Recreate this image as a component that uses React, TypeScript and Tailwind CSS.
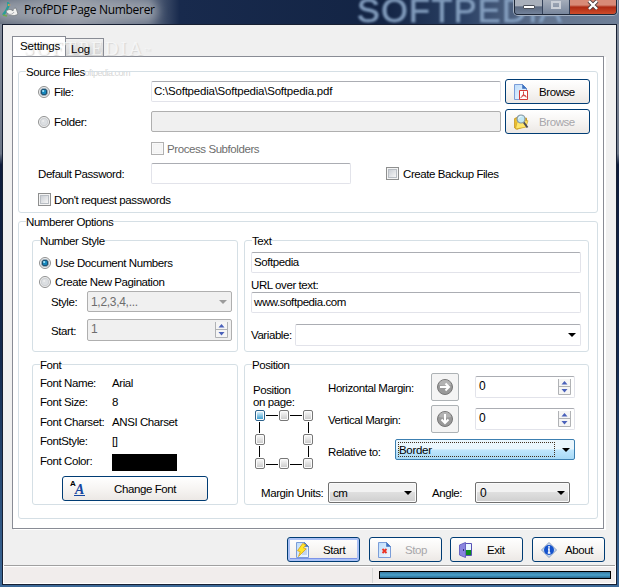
import type { ReactNode } from 'react'
import clsx from 'clsx'

type BoxProps = { className?: string; children?: ReactNode }

function Label({ className, children }: BoxProps) {
  return <span className={clsx('block shrink-0 whitespace-nowrap', className)}>{children}</span>
}

function Group({ title, className, children }: BoxProps & { title: string }) {
  return (
    <section className={clsx('relative shrink-0 rounded-[3px] border border-[#d5dfe5]', className)}>
      <h2 className="absolute -top-2 left-[7px] h-4 bg-white leading-[17px] whitespace-nowrap">{title}</h2>
      {children}
    </section>
  )
}

function Radio({ checked }: { checked?: boolean }) {
  return (
    <svg width="12" height="12" viewBox="0 0 12 12" className="shrink-0">
      <circle cx="6" cy="6" r="5.5" fill="#f4f4f4" stroke="#8e8f8f" />
      <circle cx="6" cy="6" r="3.8" fill={checked ? '#16415f' : '#dcdfe2'} stroke={checked ? '#b4c1cb' : '#c5c8cb'} strokeWidth=".8" />
      {checked && <circle cx="6" cy="6" r="2.4" fill="#1788bd" />}
      <circle cx="5.2" cy="5" r="1.1" fill={checked ? '#a9e5fa' : '#eeeeee'} />
    </svg>
  )
}

function CheckBox({ disabled }: { disabled?: boolean }) {
  return (
    <span
      className={clsx(
        'block size-[13px] shrink-0 border p-px',
        disabled ? 'border-[#b1b1b1] bg-[#f9f9f9]' : 'border-[#8e8f8f] bg-[#f4f4f4]',
      )}
    >
      <span
        className={clsx(
          'block size-full border',
          disabled ? 'border-[#f3f3f3] bg-[#f6f6f6]' : 'border-[#b9bec4] bg-gradient-to-br from-[#cbcfd5] to-[#f6f6f6]',
        )}
      />
    </span>
  )
}

function Field({ className, disabled, children }: BoxProps & { disabled?: boolean }) {
  return (
    <div
      className={clsx(
        'flex h-[21px] shrink-0 items-center rounded-[2px] border pb-px pl-[2px]',
        disabled ? 'border-[#afafaf] bg-[#f0f0f0]' : 'border-[#e2e3ea] border-t-[#abadb3] bg-white',
        className,
      )}
    >
      {children}
    </div>
  )
}

function Caret({ className }: { className: string }) {
  return (
    <svg width="8" height="4" viewBox="0 0 8 4" className={clsx('ml-auto shrink-0', className)}>
      <path d="M0 0h8L4 4z" fill="currentColor" />
    </svg>
  )
}

function Spinner({ value, className, disabled }: { value: string; className?: string; disabled?: boolean }) {
  return (
    <div
      className={clsx(
        'flex h-[22px] shrink-0 rounded-[2px] border pl-[3px]',
        disabled ? 'border-[#afafaf] bg-[#f0f0f0] text-[#6d6d6d]' : 'border-[#e2e3ea] border-t-[#abadb3] bg-white',
        className,
      )}
    >
      <span className="text-[12px] leading-[19px]">{value}</span>
      <svg width="13" height="16" viewBox="0 0 13 16" className="mt-[2px] mr-[3px] ml-auto shrink-0">
        <path d="M.5 0v15.5h12V0" fill="#f5f5f5" stroke="#b0b2b5" />
        <path d="M0 7.5h13" stroke="#b0b2b5" />
        <path d="M6.5 2 9.5 5.5h-6zM6.5 13.5l3-3.5h-6z" fill="#4a61ba" />
      </svg>
    </div>
  )
}

function Select({ className, children }: BoxProps) {
  return (
    <div
      className={clsx(
        'flex h-[21px] shrink-0 items-center rounded-[2px] border border-[#707070] bg-gradient-to-b from-[#f2f2f2] from-45% via-[#dfdfdf] via-50% to-[#cfcfcf] pl-[4px] shadow-[inset_0_0_0_1px_#fafafa]',
        className,
      )}
    >
      {children}
      <Caret className="mr-[4px] text-black" />
    </div>
  )
}

function Button({ icon, className, disabled, active, children }: BoxProps & { icon: ReactNode; disabled?: boolean; active?: boolean }) {
  return (
    <button
      className={clsx(
        'flex h-[25px] shrink-0 items-center rounded-[3px] border border-[#003c74] bg-gradient-to-b from-white via-[#f7f5f3] to-[#ece8e5] pl-[8px]',
        active && 'shadow-[inset_0_0_0_2px_#a9c0f5,inset_0_-3px_0_#7d93e8]',
        disabled && 'text-[#a7a6aa]',
        className,
      )}
    >
      {icon}
      {children}
    </button>
  )
}

function PageShape({ id }: { id: string }) {
  return (
    <>
      <defs>
        <linearGradient id={id} x1="0" x2="1" y1="0" y2="1">
          <stop stopColor="#bcdcfb" />
          <stop offset="1" stopColor="#f4f9ff" />
        </linearGradient>
      </defs>
      <path d="M.5.5h8l4 4v11H.5z" fill={`url(#${id})`} stroke="#7b9dd8" />
      <path d="M8.5.5v4h4z" fill="#3e72c0" stroke="#3e72c0" strokeWidth=".6" />
    </>
  )
}

function PdfIcon() {
  return (
    <svg width="15" height="16" viewBox="0 0 15 16" className="shrink-0">
      <PageShape id="pdf" />
      <path d="M5.5 6.5h8v9h-8z" fill="#fff" stroke="#d33b38" />
      <path d="M9.5 7.5v2.2c0 1.8-1.3 3.3-3 4M9.5 9.7c.3 1.8 1.5 3 3.2 3.3M7.5 12.2c1.3-.6 2.7-.7 4.5-.3" fill="none" stroke="#d33b38" />
    </svg>
  )
}

function FolderSearchIcon() {
  return (
    <svg width="15" height="16" viewBox="0 0 15 16" className="shrink-0">
      <path d="M.7 4.5 4 3.2l1 1.5 7.5-.5V12L3 15.2.7 14z" fill="#f2c832" stroke="#c8961c" />
      <path d="m3 8 3-1 8-.3-2.2 6.5L1.5 15z" fill="#ffe66b" stroke="#cda22a" strokeWidth=".7" />
      <path d="m9.5 8 4 5.5" stroke="#4d4d55" strokeWidth="2" />
      <circle cx="7" cy="5" r="4" fill="#c2e8f5" stroke="#8796a0" strokeWidth="1.2" />
      <path d="M4.5 4.5c.5-1.6 1.8-2 3-2" fill="none" stroke="#fff" />
    </svg>
  )
}

function LightningPageIcon() {
  return (
    <svg width="14" height="16" viewBox="0 0 14 16" className="shrink-0">
      <PageShape id="run" />
      <path d="M7 8h4M7 10h4M6 12h5" stroke="#93acd4" strokeWidth=".8" />
      <path d="M6.7 1.5 10 2.8 7.4 6l2.8.8-7.7 7.7 1.8-4.8-2.8-1z" fill="#ffe72b" stroke="#d8a01a" strokeWidth=".8" />
    </svg>
  )
}

function StopPageIcon() {
  return (
    <svg width="14" height="16" viewBox="0 0 14 16" className="shrink-0">
      <PageShape id="stop" />
      <path d="m4.5 7 4 4m0-4-4 4" stroke="#ec3323" strokeWidth="1.8" />
    </svg>
  )
}

function DoorIcon() {
  return (
    <svg width="14" height="16" viewBox="0 0 14 16" className="shrink-0">
      <path d="M4.5 1.5h8v12h-8z" fill="#e9f6ff" stroke="#5751b5" />
      <path d="M7 8h5v5H7z" fill="#0c8c1e" />
      <path d="m.5 3 6-2.5v15l-6-2.5z" fill="#8984df" stroke="#6964c3" />
      <path d="M4.5 7v2" stroke="#353276" />
    </svg>
  )
}

function InfoIcon() {
  return (
    <svg width="16" height="16" viewBox="0 0 16 16" className="shrink-0">
      <path d="m8 .5 7.5 7.5L8 15.5.5 8z" fill="#c4d6ef" stroke="#8b9fbe" strokeLinejoin="round" />
      <circle cx="8" cy="8" r="5" fill="#1552cc" />
      <path d="M8 4v1.7M7 7h1v4M6.8 11h2.6" fill="none" stroke="#fff" strokeWidth="1.5" />
    </svg>
  )
}

function FontIcon() {
  return (
    <span className="relative block h-4 w-4 shrink-0 text-left font-['Liberation_Serif',serif] font-bold tracking-normal">
      <span className="absolute -top-px -left-px font-['Liberation_Sans',sans-serif] text-[8px] leading-[8px]">A</span>
      <span className="absolute top-[3px] left-[3px] border-b border-[#1546a0] px-px text-[14px] leading-[11px] text-[#1546a0] italic">A</span>
    </span>
  )
}

function ArrowButton({ down }: { down?: boolean }) {
  return (
    <button className="flex size-7 shrink-0 items-center justify-center rounded-[2px] border border-[#adb2b5] bg-[#f4f4f4]">
      <svg width="16" height="16" viewBox="0 0 16 16">
        <circle cx="8" cy="8" r="7.5" fill="#999" stroke="#777" />
        <path d="M2 6a6 5 0 0 1 12 0c-4 1-8 1-12 0z" fill="#b3b3b3" />
        <path d="M3 8h9M8.5 4.5 12 8l-3.5 3.5" fill="none" stroke="#fff" strokeWidth="2" transform={down ? 'rotate(90 8 8)' : undefined} />
      </svg>
    </button>
  )
}

const anchors = [
  [0, 0], [24, 0], [48, 0],
  [0, 24], [48, 24],
  [0, 48], [24, 48], [48, 48],
]

function AnchorPicker() {
  return (
    <svg width="58" height="59" viewBox="0 0 58 59" className="shrink-0">
      <defs>
        <linearGradient id="anchor" x1="0" x2="0" y1="0" y2="1">
          <stop stopColor="#f5f5f5" />
          <stop offset="1" stopColor="#cdcdcd" />
        </linearGradient>
        <linearGradient id="anchorOn" x1="0" x2="0" y1="0" y2="1">
          <stop stopColor="#d8f0fb" />
          <stop offset="1" stopColor="#3f9fd0" />
        </linearGradient>
      </defs>
      <path d="M11 5.5h12M35 5.5h12M11 54.5h12M35 54.5h12M4.5 12v11M4.5 36v11M53.5 12v11M53.5 36v11" stroke="#000" />
      {anchors.map(([x, y], i) => (
        <g key={i} transform={`translate(${x} ${y})`}>
          <rect x=".5" y=".5" width="9" height="10" rx="1.5" fill="#fbfbfb" stroke={i === 0 ? '#2c628b' : '#777'} />
          <rect x="2" y="2" width="6" height="7" fill={i === 0 ? 'url(#anchorOn)' : 'url(#anchor)'} />
        </g>
      ))}
    </svg>
  )
}

function TitleBar() {
  return (
    <header className="relative flex h-6 shrink-0 overflow-hidden bg-[linear-gradient(90deg,#5a6678_0,#8c93a0_12%,#636f84_24%,#182a4d_29%,#132444_62%,#2c4266_75%,#62748f_88%,#6f7f97_100%)]">
      <div className="absolute top-0 -left-2 h-[22px] w-[166px] rounded-full bg-[#a8adb5]/70 blur-[5px]" />
      <div className="absolute -top-[9px] left-[357px] text-[34px] leading-[38px] tracking-[1.5px] text-[#8ea9c8]/90 blur-[1px] font-['Liberation_Sans',sans-serif] [-webkit-text-stroke:1px_#7893b5]">
        SOFTPEDIA
      </div>
      <svg width="17" height="16" viewBox="0 0 17 16" className="relative mt-[2px] ml-[2px] shrink-0">
        <path d="M5 1c2 0 2 2 1 4L4 9l-3 4" fill="none" stroke="#2a9d98" strokeWidth="2.4" />
        <path d="m6 2 3 1-3 1z" fill="#e8a33c" />
        <path d="M4 9c2 5 8 6 12 3l-2-6c-2 0-3 1-3 3C9 7 7 7 4 9z" fill="#f1f1ef" stroke="#757b80" strokeWidth=".8" />
        <path d="M6 12c3 1 5 0 6-2" fill="none" stroke="#a9abb0" />
        <path d="m1 13 4 1" stroke="#72a94b" strokeWidth="1.5" />
      </svg>
      <h1 className="relative ml-[5px] text-[12px] leading-[19px] tracking-[-0.3px] whitespace-nowrap text-black font-['Open_Sans',sans-serif]">
        ProfPDF Page Numberer
      </h1>
      <div className="relative mr-[2px] ml-auto flex h-[15px] overflow-hidden rounded-b-[4px] border border-t-0 border-[#1e2838] shadow-[0_0_0_1px_#a5b1c2]">
        <div className="flex w-[28px] items-center justify-center border-r border-[#334159] bg-gradient-to-b from-[#a9b0bb] from-40% via-[#5b6980] via-50% to-[#73829a]">
          <span className="block h-[4px] w-[12px] rounded-[1px] border border-[#4a4f59] bg-white" />
        </div>
        <div className="flex w-[27px] items-center justify-center border-r border-[#334159] bg-gradient-to-b from-[#a5adba] to-[#78869c] pb-[4px]">
          <span className="block h-[8px] w-[10px] border-2 border-[#cbd0d8]" />
        </div>
        <div className="flex w-[46px] items-center justify-center bg-gradient-to-b from-[#d88a77] from-35% via-[#ae2912] via-50% to-[#ce4b2a] pb-[4px]">
          <svg width="12" height="10" viewBox="0 0 12 10">
            <path d="m2 1 8 8m0-8L2 9" stroke="#4b3b3d" strokeWidth="4" />
            <path d="m2 1 8 8m0-8L2 9" stroke="#fff" strokeWidth="2.4" />
          </svg>
        </div>
      </div>
    </header>
  )
}

function SourceFiles() {
  return (
    <Group title="Source Files" className="h-[142px] pt-[7px] pl-[19px]">
      <div className="flex h-[25px] items-center">
        <Radio checked />
        <Label className="ml-[4px] w-[97px]">File:</Label>
        <Field className="w-[350px] tracking-[-0.22px]">C:\Softpedia\Softpedia\Softpedia.pdf</Field>
        <Button icon={<PdfIcon />} className="ml-[4px] w-[85px]">
          <Label className="ml-[10px]">Browse</Label>
        </Button>
      </div>
      <div className="mt-[5px] flex h-[25px] items-center">
        <Radio />
        <Label className="ml-[4px] w-[97px]">Folder:</Label>
        <Field disabled className="w-[350px]" />
        <Button icon={<FolderSearchIcon />} disabled className="ml-[4px] w-[85px]">
          <Label className="ml-[10px]">Browse</Label>
        </Button>
      </div>
      <div className="mt-[8px] ml-[113px] flex h-[13px] items-center">
        <CheckBox disabled />
        <Label className="ml-[3px] text-[#6d6d6d]">Process Subfolders</Label>
      </div>
      <div className="mt-[8px] flex h-[21px] items-center">
        <Label className="w-[113px]">Default Password:</Label>
        <Field className="w-[200px]" />
        <div className="ml-[35px] flex">
          <CheckBox />
          <Label className="ml-[4px] leading-[14px]">Create Backup Files</Label>
        </div>
      </div>
      <div className="mt-[9px] flex h-[13px] items-center">
        <CheckBox />
        <Label className="ml-[3px]">Don't request passwords</Label>
      </div>
    </Group>
  )
}

function NumberStyle() {
  return (
    <Group title="Number Style" className="h-[112px] w-[206px] pt-[16px] pl-[6px]">
      <div className="flex h-[12px] items-center">
        <Radio checked />
        <Label className="ml-[4px]">Use Document Numbers</Label>
      </div>
      <div className="mt-[7px] flex h-[12px] items-center">
        <Radio />
        <Label className="ml-[4px]">Create New Pagination</Label>
      </div>
      <div className="mt-[3px] ml-[12px] flex h-[21px] items-center">
        <Label className="w-[36px]">Style:</Label>
        <div className="flex h-[21px] w-[145px] items-center rounded-[2px] border border-[#afafaf] bg-[#f0f0f0] pl-[3px] text-[12px] tracking-[-0.3px] text-[#6d6d6d]">
          1,2,3,4,...
          <Caret className="mr-[4px] text-[#9b9b9b]" />
        </div>
      </div>
      <div className="mt-[7px] ml-[12px] flex h-[22px] items-center">
        <Label className="w-[36px] pt-px">Start:</Label>
        <Spinner value="1" disabled className="w-[145px]" />
      </div>
    </Group>
  )
}

function TextOptions() {
  return (
    <Group title="Text" className="h-[112px] w-[345px] pt-[11px] pl-[6px]">
      <Field className="w-[330px]">Softpedia</Field>
      <Label className="mt-[4px] h-[15px] leading-[17px]">URL over text:</Label>
      <Field className="w-[330px]">www.softpedia.com</Field>
      <div className="mt-[11px] flex items-center">
        <Label className="w-[44px]">Variable:</Label>
        <Field className="h-[22px] w-[286px]">
          <Caret className="mr-[4px] text-black" />
        </Field>
      </div>
    </Group>
  )
}

const fontInfo = [
  { label: 'Font Name:', value: 'Arial' },
  { label: 'Font Size:', value: '8' },
  { label: 'Font Charset:', value: 'ANSI Charset' },
  { label: 'FontStyle:', value: '[]' },
]

function FontOptions() {
  return (
    <Group title="Font" className="h-[141px] w-[206px] pt-[8px] pl-[7px]">
      {fontInfo.map((row) => (
        <div key={row.label} className="flex h-[19.5px] items-center">
          <Label className="w-[72px]">{row.label}</Label>
          <Label>{row.value}</Label>
        </div>
      ))}
      <div className="mt-[3px] flex h-[17px] items-center">
        <Label className="w-[72px] pb-[4px]">Font Color:</Label>
        <span className="block h-[17px] w-[65px] bg-black" />
      </div>
      <Button icon={<FontIcon />} className="mt-[5px] ml-[22px] w-[146px]">
        <Label className="ml-[27px] tracking-[-0.4px]">Change Font</Label>
      </Button>
    </Group>
  )
}

function PositionOptions() {
  return (
    <Group title="Position" className="h-[141px] w-[345px] pt-[8px]">
      <div className="flex">
        <div className="w-[83px] pt-[12px] pl-[8px]">
          <Label className="leading-[11.5px]">
            Position
            <br />
            on page:
          </Label>
          <div className="mt-[2px] ml-[2px]">
            <AnchorPicker />
          </div>
        </div>
        <div>
          <div className="flex h-[28px] items-center">
            <Label className="w-[103px] pt-px">Horizontal Margin:</Label>
            <ArrowButton />
            <Spinner value="0" className="ml-[16px] w-[100px]" />
          </div>
          <div className="mt-[4px] flex h-[28px] items-center">
            <Label className="w-[103px] pt-px">Vertical Margin:</Label>
            <ArrowButton down />
            <Spinner value="0" className="ml-[16px] w-[100px]" />
          </div>
          <div className="mt-[6px] flex h-[21px] items-center">
            <Label className="w-[67px] pt-[4px]">Relative to:</Label>
            <div className="flex h-[21px] w-[180px] items-center rounded-[2px] border border-[#3c7fb1] bg-gradient-to-b from-[#eaf6fd] from-45% via-[#bee6fd] via-55% to-[#a7d9f5] pl-[2px]">
              <div className="h-[15px] w-[157px] border border-dotted border-[#40301f] leading-[14px] tracking-[-0.3px]">Border</div>
              <Caret className="mr-[4px] text-black" />
            </div>
          </div>
        </div>
      </div>
      <div className="mt-[13px] flex h-[21px] items-center pl-[16px]">
        <Label className="w-[67px]">Margin Units:</Label>
        <Select className="w-[89px]">cm</Select>
        <Label className="ml-[15px] w-[43px]">Angle:</Label>
        <Select className="w-[95px]">
          <span className="text-[12px]">0</span>
        </Select>
      </div>
    </Group>
  )
}

export default function App() {
  return (
    <div className="flex h-[587px] w-[619px] flex-col overflow-hidden bg-[#1a2b4b] text-[11.5px] leading-[14px] tracking-[-0.42px] text-black font-['Liberation_Sans',sans-serif]">
      <TitleBar />
      <div className="flex min-h-0 flex-1 flex-col bg-[linear-gradient(180deg,#838c9b_0,#6d7788_23%,#0e1c3b_25%,#142b50_60%,#3c6998_100%)] px-[2px] pb-[2px]">
        <main className="flex min-h-0 flex-1 flex-col border border-[#172033] bg-[#f0f0f0]">
          <div className="relative mt-[11px] ml-[9px] flex h-[20px] w-[592px] shrink-0 items-end">
            <div className="relative h-[21px] w-[54px] translate-y-px border border-b-0 border-[#898c95] bg-white" />
            <div className="-ml-px h-[18px] w-[39px] border border-b-0 border-[#898c95] bg-gradient-to-b from-[#f2f2f2] to-[#d4d4d4] pt-[3px] pl-[5px]">
              <span className="relative z-30 tracking-normal">Log</span>
            </div>
            {/* embossed watermark sits between the tab faces and their captions */}
            <div className="pointer-events-none absolute top-[3px] left-[12px] z-20 text-[19px] leading-[20px] tracking-[2px] text-[#fafafa]/80 font-['Liberation_Serif',serif] [text-shadow:1px_1px_1px_#d4d4d4]">
              SOFTPEDIA<sup className="text-[6px]">™</sup>
            </div>
            <span className="absolute top-[3px] left-[8px] z-30 tracking-[-0.2px]">Settings</span>
          </div>
          <div className="relative ml-[9px] h-[473px] w-[592px] shrink-0 border border-[#898c95] bg-white px-[5px] pt-[14px] shadow-[2px_1px_0_#fff]">
            <div className="pointer-events-none absolute top-[9px] left-[48px] text-[9px] leading-[14px] tracking-[-0.5px] text-[#d6d6d6]">www.softpedia.com</div>
            <SourceFiles />
            <Group title="Numberer Options" className="mt-[8px] h-[298px] pt-[18px] pl-[13px]">
              <div className="flex gap-[6px]">
                <NumberStyle />
                <TextOptions />
              </div>
              <div className="mt-[12px] flex gap-[6px]">
                <FontOptions />
                <PositionOptions />
              </div>
            </Group>
          </div>
          <div className="mt-[8px] ml-[284px] flex h-[25px] shrink-0">
            <Button icon={<LightningPageIcon />} active className="w-[73px]">
              <Label className="ml-[13px]">Start</Label>
            </Button>
            <Button icon={<StopPageIcon />} disabled className="ml-[9px] w-[73px]">
              <Label className="ml-[13px]">Stop</Label>
            </Button>
            <Button icon={<DoorIcon />} className="ml-[8px] w-[73px]">
              <Label className="ml-[14px]">Exit</Label>
            </Button>
            <Button icon={<InfoIcon />} className="ml-[9px] w-[73px] pl-[7px]">
              <Label className="ml-[8px]">About</Label>
            </Button>
          </div>
          <footer className="mt-[3px] flex min-h-0 flex-1 border border-t-0 border-white bg-[#f1edec] shadow-[inset_0_1px_0_#a0a0a0,inset_0_2px_0_#fff]">
            <div className="mt-[3px] w-[369px] border-r border-[#d7d7d7]" />
            <div className="mt-[6px] ml-[6px] h-[8px] w-[232px] border border-black bg-gradient-to-b from-[#3778a0] via-[#4aa2cb] to-[#28668d]" />
          </footer>
        </main>
      </div>
    </div>
  )
}
